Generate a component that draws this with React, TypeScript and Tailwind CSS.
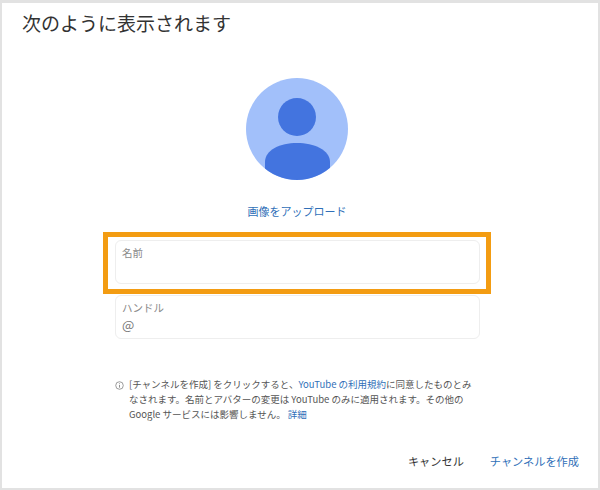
const font = { fontFamily: '"Noto Sans CJK JP", "Liberation Sans", sans-serif' };

function Avatar() {
  return (
    <svg width="102" height="102" viewBox="0 0 102 102" className="block">
      <defs>
        <clipPath id="avatar-clip">
          <circle cx="51" cy="51" r="51" />
        </clipPath>
      </defs>
      <circle cx="51" cy="51" r="51" fill="#a2c0fa" />
      <circle cx="51" cy="39" r="19" fill="#4374df" />
      <path
        d="M19 102 V84 C19 72 34 65 51 65 C68 65 84 72 84 84 V102 Z"
        fill="#4374df"
        clipPath="url(#avatar-clip)"
      />
    </svg>
  );
}

function Field({ label, value }: { label: string; value?: string }) {
  return (
    <div className="h-[44px] w-[365px] rounded-[6px] border border-[#eeeeee] px-[6px] pt-[4px] text-[10.5px] leading-[16px] text-[#8a8a8a]">
      <div>{label}</div>
      {value && <div className="text-[13px] leading-[17px] text-[#777777]">{value}</div>}
    </div>
  );
}

export default function App() {
  return (
    <div
      style={font}
      className="relative flex h-[490px] w-[600px] flex-col overflow-hidden border-t-[3px] border-r-[2px] border-b-[2px] border-l-[2px] border-[#e2e2e2] bg-white"
    >
      <h1 className="pl-[20px] pt-[7px] text-[19px] leading-[26px] font-normal text-[#333333]">
        次のように表示されます
      </h1>

      <div className="mt-[42px] flex flex-col items-center pr-[6px]">
        <Avatar />
        <a className="mt-[23px] text-[11px] leading-[16px] text-[#2f6fb8]">画像をアップロード</a>
      </div>

      <div className="relative mt-[21px] flex flex-col gap-[11px] pl-[113px]">
        <Field label="名前" />
        <Field label="ハンドル" value="@" />
        <div className="absolute left-[101px] top-[-8px] h-[62px] w-[388px] border-[5px] border-[#f39c12]" />
      </div>

      <div className="mt-[38px] flex pl-[113px] text-[9.5px] leading-[15px] text-[#555555]">
        <svg width="9" height="9" viewBox="0 0 10 10" className="mt-[4px] mr-[5px] shrink-0">
          <circle cx="5" cy="5" r="4.2" fill="none" stroke="#777777" strokeWidth="0.8" />
          <path d="M5 4.4V7.4M5 2.6V3.5" stroke="#777777" strokeWidth="0.9" />
        </svg>
        <p className="whitespace-nowrap">
          [チャンネルを作成] をクリックすると、<span className="text-[#2f6fb8]">YouTube の利用規約</span>
          に同意したものとみ
          <br />
          なされます。名前とアバターの変更は YouTube のみに適用されます。その他の
          <br />
          Google サービスには影響しません。 <span className="text-[#2f6fb8]">詳細</span>
        </p>
      </div>

      <div className="mt-[31px] flex justify-end gap-[26px] pr-[19px] text-[11.2px] leading-[16px]">
        <span className="text-[#333333]">キャンセル</span>
        <span className="text-[#2f6fb8]">チャンネルを作成</span>
      </div>
    </div>
  );
}
